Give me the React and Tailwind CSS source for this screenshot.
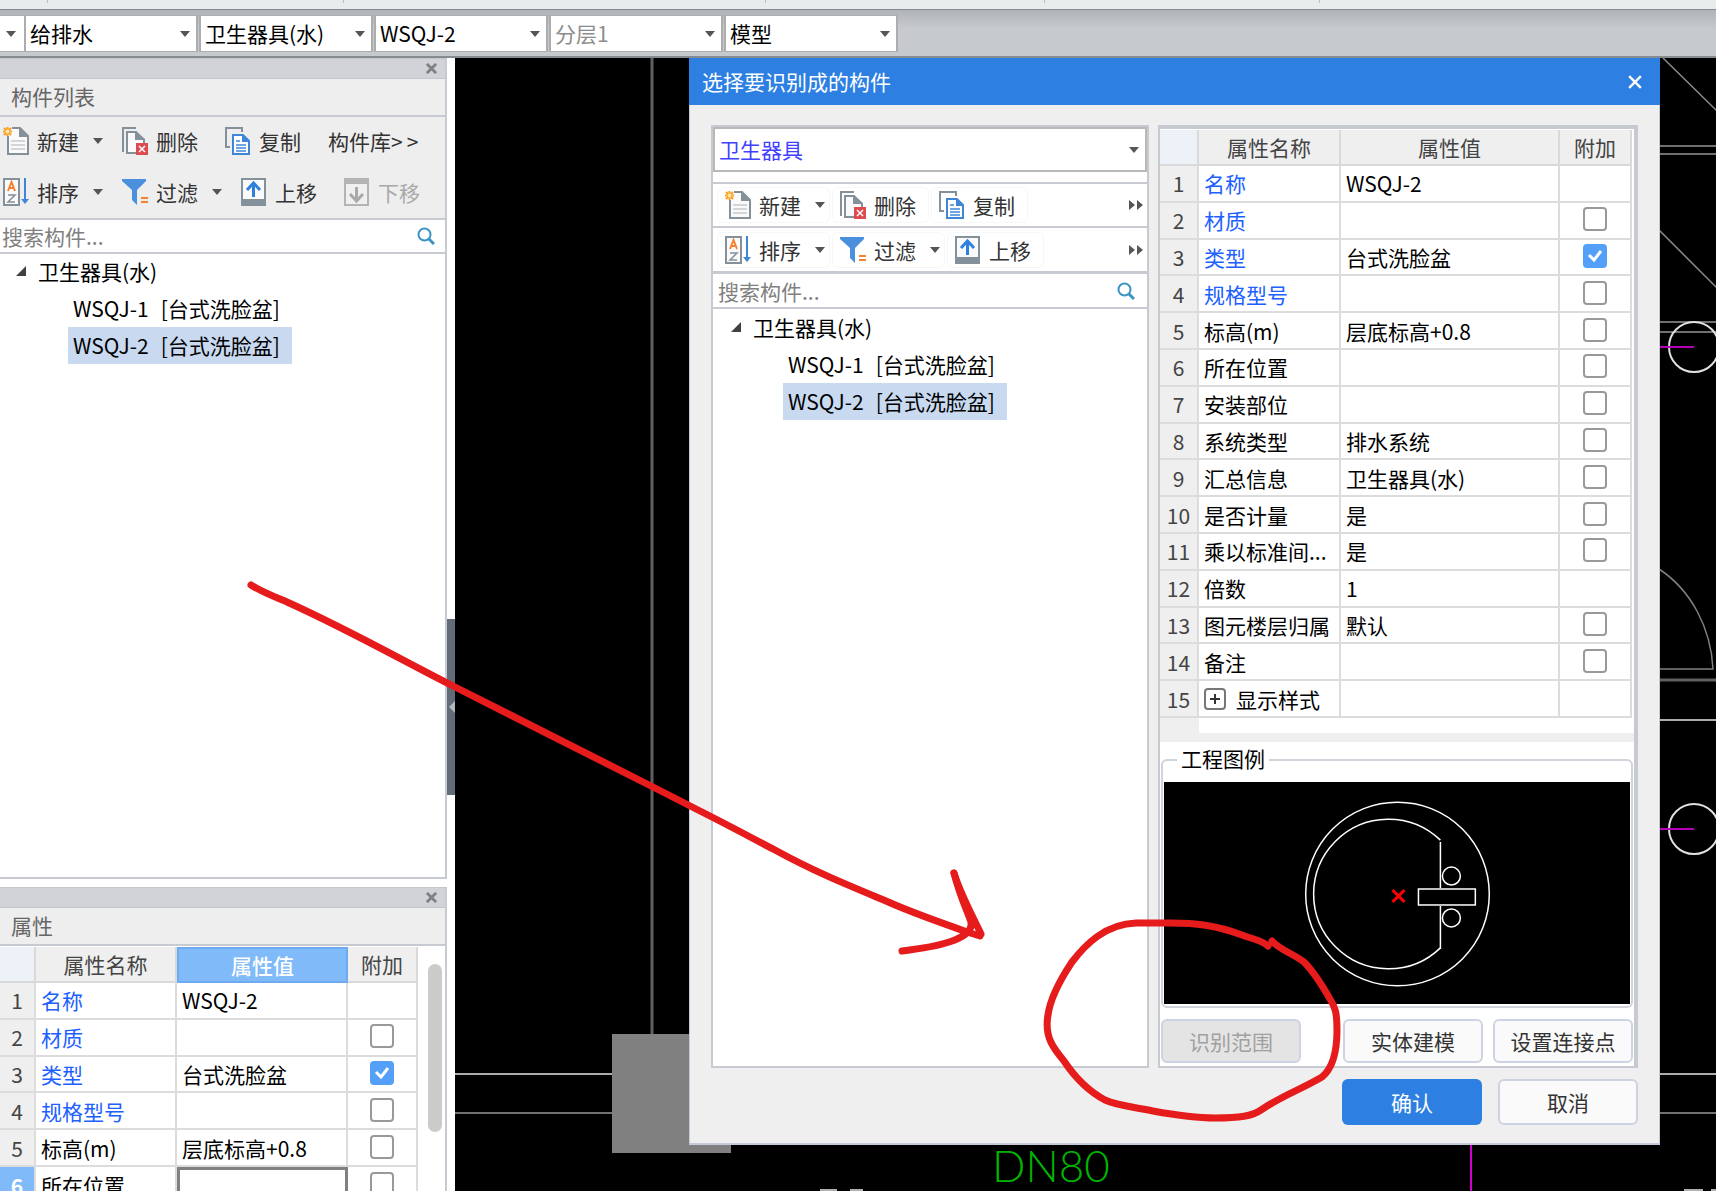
import { useState } from 'react'
import clsx from 'clsx'

const FONT = 'font-["Noto_Sans_CJK_SC",sans-serif]'

const properties = [
  { name: '名称', value: 'WSQJ-2', required: true },
  { name: '材质', value: '', required: true, extra: false },
  { name: '类型', value: '台式洗脸盆', required: true, extra: true },
  { name: '规格型号', value: '', required: true, extra: false },
  { name: '标高(m)', value: '层底标高+0.8', extra: false },
  { name: '所在位置', value: '', extra: false },
  { name: '安装部位', value: '', extra: false },
  { name: '系统类型', value: '排水系统', extra: false },
  { name: '汇总信息', value: '卫生器具(水)', extra: false },
  { name: '是否计量', value: '是', extra: false },
  { name: '乘以标准间...', value: '是', extra: false },
  { name: '倍数', value: '1' },
  { name: '图元楼层归属', value: '默认', extra: false },
  { name: '备注', value: '', extra: false },
  { name: '显示样式', value: '', group: true },
]

function NewIcon() {
  return (
    <svg width="26" height="28" viewBox="0 0 26 28" fill="none">
      <path d="M5 9V27H25V9L17 1H9" fill="#fafafa" stroke="#84909a" strokeWidth="2" />
      <path d="M16 0V10H26Z" fill="#84909a" />
      <path d="M8 14H22M8 18H22M8 22H22" stroke="#d3d6d9" strokeWidth="2" />
      <path d="M4.500 0V9M0 4.500H9M1 1L8 8M8 1L1 8" stroke="#ff9d1e" strokeWidth="2" />
      <circle cx="4.500" cy="4.500" r="2" fill="#ffe9b8" />
    </svg>
  )
}

function DeleteIcon() {
  return (
    <svg width="26" height="28" viewBox="0 0 26 28" fill="none">
      <path d="M1 25V1H14" stroke="#84909a" strokeWidth="2" />
      <path d="M14 26H5V5H14L22 13V16" fill="#fafafa" stroke="#84909a" strokeWidth="2" />
      <path d="M13 4V13H23V12Z" fill="#84909a" />
      <rect x="14" y="16" width="12" height="12" fill="#dc4b50" />
      <path d="M17 19L23 25M23 19L17 25" stroke="#fff" strokeWidth="1.500" />
    </svg>
  )
}

function CopyIcon() {
  return (
    <svg width="26" height="28" viewBox="0 0 26 28" fill="none">
      <path d="M5 20H1V1H17V5" stroke="#84909a" strokeWidth="2" />
      <path d="M8 27V8H18L24 14V27Z" fill="#fff" stroke="#3f86d9" strokeWidth="2" />
      <path d="M17 7V15H25Z" fill="#3f86d9" />
      <path d="M11 14H15M11 18H21M11 21H21M11 24H21" stroke="#3f86d9" strokeWidth="1.500" />
    </svg>
  )
}

function SortIcon() {
  return (
    <svg width="26" height="28" viewBox="0 0 26 28" fill="none">
      <rect x="1" y="1" width="15" height="26" fill="#fafafa" stroke="#84909a" strokeWidth="2" />
      <path d="M5 13L8.500 4L12 13M6 10H11" stroke="#f58233" strokeWidth="2" />
      <path d="M5 17H12L5 24H12" stroke="#84909a" strokeWidth="1.500" />
      <path d="M22 0V23" stroke="#3f86d9" strokeWidth="2" />
      <path d="M18 21H26L22 26Z" fill="#3f86d9" />
    </svg>
  )
}

function FilterIcon() {
  return (
    <svg width="26" height="28" viewBox="0 0 26 28" fill="none">
      <path d="M0 1H24V3L15 12V27L10 22V12L0 3Z" fill="#4a90dd" />
      <path d="M19 20H26M19 24H26" stroke="#f58233" strokeWidth="2" />
    </svg>
  )
}

function MoveUpIcon() {
  return (
    <svg width="26" height="28" viewBox="0 0 26 28" fill="none">
      <rect x="1" y="1" width="23" height="26" fill="#fafafa" stroke="#84909a" strokeWidth="2" />
      <rect x="0" y="21" width="25" height="7" fill="#84909a" />
      <path d="M12.500 19V6M6 12L12.500 5L19 12" stroke="#2f80de" strokeWidth="3" />
    </svg>
  )
}

function MoveDownIcon() {
  return (
    <svg width="26" height="28" viewBox="0 0 26 28" fill="none">
      <rect x="1" y="1" width="23" height="26" fill="#f0f0f0" stroke="#b4b4b4" strokeWidth="2" />
      <rect x="0" y="0" width="25" height="6" fill="#b4b4b4" />
      <path d="M12.500 9V22M6 16L12.500 23L19 16" stroke="#a9a9a9" strokeWidth="3" />
    </svg>
  )
}

function SearchIcon() {
  return (
    <svg width="18" height="18" viewBox="0 0 18 18" fill="none">
      <circle cx="7.500" cy="7.500" r="6" stroke="#3c93c6" strokeWidth="2" />
      <path d="M12 12L17 17" stroke="#3c93c6" strokeWidth="3" />
    </svg>
  )
}

function Caret({ className }) {
  return (
    <svg className={className} width="10" height="6" viewBox="0 0 10 6">
      <path d="M0 0H10L5 6Z" fill="#555" />
    </svg>
  )
}

function CloseIcon({ size, color, width }) {
  return (
    <svg width={size} height={size} viewBox="0 0 12 12">
      <path d="M1 1L11 11M11 1L1 11" stroke={color} strokeWidth={width} />
    </svg>
  )
}

function Combo({ label, value, disabled, className, textClass = 'text-black', caretClass = 'right-1.5' }) {
  return (
    <div className={clsx('relative', className)}>
      <select
        aria-label={label}
        disabled={disabled}
        className={clsx('block w-full h-full appearance-none bg-white pl-1 pr-6 pb-0.5 outline-none opacity-100', textClass)}
      >
        <option>{value}</option>
      </select>
      <Caret className={clsx('absolute top-1/2 -translate-y-1/2 pointer-events-none', caretClass)} />
    </div>
  )
}

function ToolButton({ icon, label, menu, framed, disabled }) {
  return (
    <button
      type="button"
      disabled={disabled}
      className={clsx(
        'flex items-center shrink-0 h-9 whitespace-nowrap',
        framed && 'pl-2 rounded-md shadow-[inset_0_0_0_1px_#f7f7f7]',
        menu ? 'pr-[5px]' : 'pr-[13px]',
        disabled ? 'text-[#a9a9a9]' : 'text-[#333]'
      )}
    >
      {icon}
      <span className="ml-2">{label}</span>
      {menu && <Caret className="ml-3.5" />}
    </button>
  )
}

function MoreButton() {
  return (
    <button type="button" aria-label="更多" className="ml-auto mr-1">
      <svg width="14" height="10" viewBox="0 0 14 10">
        <path d="M0 0L6 5L0 10ZM8 0L14 5L8 10Z" fill="#555" />
      </svg>
    </button>
  )
}

function SearchBox({ id, className }) {
  return (
    <div className={clsx('flex items-center bg-white', className)}>
      <input
        id={id}
        type="text"
        aria-label="搜索构件"
        placeholder="搜索构件..."
        className="flex-1 min-w-0 h-full outline-none placeholder:text-[#808080]"
      />
      <SearchIcon />
    </div>
  )
}

function Tree({ className }) {
  const [selected, setSelected] = useState('WSQJ-2')

  return (
    <ul className={clsx('flex-1 bg-white text-black', className)}>
      <li>
        <button type="button" className="flex items-center h-9 gap-3 pb-0.5">
          <svg width="10" height="10" viewBox="0 0 10 10">
            <path d="M10 0V10H0Z" fill="#404040" />
          </svg>
          卫生器具(水)
        </button>
        <ul className="pl-[52px]">
          {['WSQJ-1', 'WSQJ-2'].map((code) => (
            <li key={code}>
              <button
                type="button"
                onClick={() => setSelected(code)}
                className={clsx(
                  'flex items-center gap-3 h-[37px] w-56 pl-[5px] pb-0.5 whitespace-nowrap',
                  selected === code && 'bg-[#c8d9f0]'
                )}
              >
                <span>{code}</span>
                <span>[台式洗脸盆]</span>
              </button>
            </li>
          ))}
        </ul>
      </li>
    </ul>
  )
}

function ExtraCheck({ name, defaultChecked }) {
  return (
    <span className="relative block size-6 mx-auto mb-0.5">
      <input
        type="checkbox"
        aria-label={`${name} 附加`}
        defaultChecked={defaultChecked}
        className="peer block size-6 appearance-none rounded-[4px] border-2 border-[#999] bg-white checked:border-[#54a0f8] checked:bg-[#54a0f8]"
      />
      <svg className="absolute inset-0 hidden peer-checked:block pointer-events-none" viewBox="0 0 24 24" fill="none">
        <path d="M6 11L11 16L18 7" stroke="#fff" strokeWidth="3" />
      </svg>
    </span>
  )
}

function PropertyTable({ rows, columns, activeRow, className }) {
  const head = 'border-r-2 border-b-2 border-[#d9d9d9] bg-[#efefef] font-normal text-[#444]'
  const cell = 'border-r-2 border-b-2 border-[#dcdcdc]'

  return (
    <table className={clsx('w-full table-fixed border-separate border-spacing-0 bg-white', className)}>
      <colgroup>
        {columns.map((c, i) => (
          <col key={i} className={c} />
        ))}
      </colgroup>
      <thead>
        <tr className="h-9">
          <th className="border-r-2 border-b-2 border-[#d9d9d9] bg-[#edf1f8]" />
          <th className={head}>属性名称</th>
          <th className={activeRow ? 'border-2 border-[#6eaaf0] bg-[#80baf9] font-medium text-white' : head}>属性值</th>
          <th className={head}>附加</th>
        </tr>
      </thead>
      <tbody>
        {rows.map((p, i) => {
          const active = activeRow === i + 1
          return (
            <tr key={p.name} className="h-9">
              <td
                className={clsx(
                  'border-r-2 border-b-2 border-[#dcdcdc] text-center',
                  active ? 'bg-[#80baf9] font-bold text-white' : 'bg-[#efefef] text-[#444]'
                )}
              >
                {i + 1}
              </td>
              <td className={clsx(cell, 'pl-[5px] whitespace-nowrap overflow-hidden', p.required ? 'text-[#2060ff]' : 'text-black')}>
                {p.group ? (
                  <span className="flex items-center gap-2.5">
                    <button
                      type="button"
                      aria-label="展开"
                      className="flex items-center justify-center size-[22px] rounded-[4px] border-2 border-[#777]"
                    >
                      <svg width="10" height="10" viewBox="0 0 10 10">
                        <path d="M5 0V10M0 5H10" stroke="#333" strokeWidth="2" />
                      </svg>
                    </button>
                    {p.name}
                  </span>
                ) : (
                  p.name
                )}
              </td>
              <td className={clsx('pl-[5px] whitespace-nowrap text-black', active ? 'border-3 border-[#808080]' : cell)}>{p.value}</td>
              <td className={cell}>{p.extra !== undefined && <ExtraCheck name={p.name} defaultChecked={p.extra} />}</td>
            </tr>
          )
        })}
      </tbody>
    </table>
  )
}

function DockTitle({ title }) {
  return (
    <>
      <div className="flex items-center justify-end h-[21px] pr-2 bg-[#d2d3d9] border-y border-[#c3c6cb]">
        <button type="button" aria-label={`关闭${title}`}>
          <CloseIcon size={11} color="#808080" width={3} />
        </button>
      </div>
      <h2 className="flex items-center h-[38px] pl-[11px] pb-0.5 bg-[#eee] border-b-2 border-[#c7cad0] text-[#666]">{title}</h2>
    </>
  )
}

function Sidebar() {
  return (
    <aside className="flex flex-col w-[447px] shrink-0 bg-white">
      <section className="flex flex-col h-[821px] border-r-2 border-b-2 border-[#c7cad0]">
        <DockTitle title="构件列表" />
        <div className="bg-[#eee] pl-[3px] pt-1.5 pb-2 border-b-2 border-[#c7cad0]">
          <div className="flex gap-3.5 mb-[15px]">
            <ToolButton icon={<NewIcon />} label="新建" menu />
            <ToolButton icon={<DeleteIcon />} label="删除" />
            <ToolButton icon={<CopyIcon />} label="复制" />
            <button type="button" className="flex items-center gap-1 text-[#333] whitespace-nowrap">
              <span>构件库&gt;</span>
              <span>&gt;</span>
            </button>
          </div>
          <div className="flex gap-3.5">
            <ToolButton icon={<SortIcon />} label="排序" menu />
            <ToolButton icon={<FilterIcon />} label="过滤" menu />
            <ToolButton icon={<MoveUpIcon />} label="上移" />
            <ToolButton icon={<MoveDownIcon />} label="下移" disabled />
          </div>
        </div>
        <SearchBox id="dock-search" className="h-[34px] pl-0.5 pr-2.5 border-b-2 border-[#c7cad0]" />
        <Tree className="pl-4" />
      </section>

      <section className="flex flex-col flex-1 min-h-0 mt-2 border-r-2 border-[#c7cad0]">
        <DockTitle title="属性" />
        <div className="flex flex-1 min-h-0 overflow-hidden">
          <div className="w-[418px] pt-px">
            <PropertyTable
              rows={properties.slice(0, 6)}
              columns={['w-9', 'w-[141px]', 'w-[171px]', 'w-[70px]']}
              activeRow={6}
              className="h-[257px]"
            />
          </div>
          <div className="flex-1 pt-[18px] pl-2.5">
            <div className="w-3.5 h-[168px] rounded-full bg-[#cbcbcb]" />
          </div>
        </div>
      </section>
    </aside>
  )
}

function Drawing() {
  return (
    <svg className="absolute inset-0 w-full h-full" fill="none">
      <path d="M197 0V976" stroke="#606060" strokeWidth="3" />
      <path d="M0 1016H157M1205 1016H1400" stroke="#a8acac" strokeWidth="2" />
      <path d="M0 1055H157M1205 1055H1400" stroke="#707070" strokeWidth="2" />
      <rect x="157" y="976" width="119" height="119" fill="#808080" />
      <path d="M1208 0L1262 53M1204 172L1262 230" stroke="#8a8a8a" strokeWidth="1.500" />
      <path d="M1205 88H1400M1205 96H1400M1205 264H1400M1205 274H1400" stroke="#707070" strokeWidth="2" />
      <path d="M1204 511C1236 532 1256 570 1258 611H1204" stroke="#808080" strokeWidth="1.500" />
      <path d="M1205 622H1400" stroke="#606060" strokeWidth="3" />
      <path d="M1205 662H1400" stroke="#a8acac" strokeWidth="2" />
      <circle cx="1239" cy="289" r="25" stroke="#e0e0e0" strokeWidth="2" />
      <circle cx="1239" cy="771" r="25" stroke="#e0e0e0" strokeWidth="2" />
      <path d="M1205 289H1239M1205 771H1239" stroke="#b400b4" strokeWidth="2" />
      <path d="M1016 1080V1140" stroke="#d000d0" strokeWidth="2" />
      <path d="M365 1132H382M395 1132H408M1229 1132H1248M1256 1132H1262" stroke="#b0b0b0" strokeWidth="2" />
      <text x="537" y="1124" fill="#00b400" className="font-['Lato',sans-serif] text-[44px] font-light">
        DN80
      </text>
    </svg>
  )
}

function LegendPreview() {
  return (
    <svg className="block w-full h-[222px] bg-black" viewBox="0 0 467 222" fill="none" stroke="#fff" strokeWidth="1.500">
      <circle cx="234" cy="112" r="92" />
      <path d="M277 58A75 75 0 1 0 277 166" />
      <path d="M277 60V106M277 124V167" />
      <rect x="255" y="107" width="57" height="16" />
      <circle cx="288" cy="94" r="9" />
      <circle cx="288" cy="136" r="9" />
      <path d="M229 108L241 120M241 108L229 120" stroke="#f00" strokeWidth="3" />
    </svg>
  )
}

function PickDialog() {
  const plain = 'w-[140px] rounded-md border-2 border-[#cdd3e2] bg-[#fafafa] text-[#333]'

  return (
    <div role="dialog" aria-label="选择要识别成的构件" className="absolute left-[234px] right-14 top-0 bg-[#efefef]">
      <div className="flex items-center justify-between h-[47px] pl-[13px] pr-4 bg-[#2d80e2] text-white">
        <h1 className="pb-0.5">选择要识别成的构件</h1>
        <button type="button" aria-label="关闭" className="mr-0.5">
          <CloseIcon size={14} color="#fff" width={2} />
        </button>
      </div>

      <div className="px-[21px] pt-5 pb-[18px] border-x border-b-2 border-[#c5cad8]">
        <div className="flex">
          <div className="flex flex-col flex-1 min-w-0 border-2 border-[#c7cad0] bg-white">
            <Combo
              label="构件类型"
              value="卫生器具"
              className="h-[45px] border-2 border-[#b8b8b8]"
              textClass="text-[#4040ff]"
            />
            <div className="flex items-center gap-0.5 h-[46px] mt-2.5 pl-1 border-y-2 border-[#c7cad0]">
              <ToolButton icon={<NewIcon />} label="新建" menu framed />
              <ToolButton icon={<DeleteIcon />} label="删除" framed />
              <ToolButton icon={<CopyIcon />} label="复制" framed />
              <MoreButton />
            </div>
            <div className="flex items-center gap-0.5 h-[46px] pl-1 border-b-3 border-[#c7cad0]">
              <ToolButton icon={<SortIcon />} label="排序" menu framed />
              <ToolButton icon={<FilterIcon />} label="过滤" menu framed />
              <ToolButton icon={<MoveUpIcon />} label="上移" framed />
              <MoreButton />
            </div>
            <SearchBox id="dialog-search" className="h-[35px] pl-[5px] pr-3 border-b-2 border-[#c7cad0]" />
            <Tree className="pl-[18px] pt-px" />
          </div>

          <div className="w-[9px] shrink-0" />

          <div className="w-[480px] shrink-0 border-2 border-t-4 border-r-4 border-[#c7cad0] bg-white">
            <div className="pt-px pr-0.5">
              <PropertyTable
                rows={properties}
                columns={['w-[39px]', 'w-[142px]', '', 'w-[72px]']}
                className="h-[588px]"
              />
            </div>
            <div className="w-[39px] h-[15px] bg-[#efefef]" />
            <div className="h-[9px] bg-[#efefef]" />
            <fieldset className="mx-px mt-0.5 pb-0.5 min-w-0 rounded-md border-2 border-[#d0d4da]">
              <legend className="ml-3.5 px-1 pb-1 h-8 leading-7 text-black">工程图例</legend>
              <div className="px-px pt-1.5">
                <LegendPreview />
              </div>
            </fieldset>
            <div className="flex h-11 mx-px mt-[11px] mb-[3px]">
              <button type="button" disabled className="w-[140px] mr-auto rounded-md border-2 border-[#cdd3e2] bg-[#e4e4e4] text-[#a0a0a0]">
                识别范围
              </button>
              <button type="button" className={clsx(plain, 'mr-2.5')}>
                实体建模
              </button>
              <button type="button" className={plain}>
                设置连接点
              </button>
            </div>
          </div>
        </div>

        <div className="flex justify-end gap-4 h-[46px] mt-[11px]">
          <button type="button" className="w-[140px] rounded-md bg-[#2d80e2] text-white">
            确认
          </button>
          <button type="button" className={plain}>
            取消
          </button>
        </div>
      </div>
    </div>
  )
}

// Hand-drawn red arrow and circle that lie over the whole window
function Markup() {
  return (
    <svg
      className="absolute inset-0 w-full h-full pointer-events-none"
      fill="none"
      stroke="#e61b1b"
      strokeWidth="7"
      strokeLinecap="round"
      strokeLinejoin="round"
    >
      <path d="M251 585C262 592 275 597 287 602C345 628 398 658 453 686L653 787L700 811C728 825 750 837 775 850C815 872 850 886 886 901C915 914 940 922 967 932L980 936" />
      <path d="M954 873C960 897 967 910 971 922C974 940 935 947 902 951" />
      <path d="M954 873C960 893 972 915 981 934" />
      <path d="M1268 946C1262 940 1252 939 1242 935C1215 925 1195 923 1171 923H1136C1105 924 1085 945 1072 962C1060 980 1050 1000 1048 1015C1044 1037 1054 1049 1064 1061C1076 1079 1090 1092 1105 1100C1118 1106 1135 1107 1153 1111C1175 1115 1195 1118 1215 1118C1240 1118 1252 1116 1261 1110C1283 1095 1300 1090 1322 1077C1333 1068 1337 1050 1337 1030C1337 1012 1335 1007 1330 999C1322 985 1314 972 1304 962C1294 954 1280 950 1272 941" />
    </svg>
  )
}

export default function App() {
  return (
    <div className={clsx('relative flex flex-col h-screen overflow-hidden bg-white text-[21px] leading-7', FONT)}>
      <div className="flex h-[9px] shrink-0 bg-[#e9eced]">
        <div className="w-12 h-[3px] border-r border-[#b9bdc1]" />
        <div className="w-[296px] h-[3px] border-r border-[#b9bdc1]" />
        <div className="w-[422px] h-[3px] border-r border-[#b9bdc1]" />
        <div className="w-[279px] h-[3px] border-r border-[#b9bdc1]" />
        <div className="w-[275px] h-[3px] border-r border-[#b9bdc1]" />
      </div>

      <header className="flex h-[49px] shrink-0 pt-[5px] pb-1 border-t border-b-2 border-[#868b90] bg-linear-to-b from-[#b0b3b7] to-[#c6c9cd] to-40%">
        <Combo label="楼层" value="" className="w-6 border-y border-r-2 border-[#adadad]" />
        <div className="flex gap-px">
          <Combo label="专业" value="给排水" className="w-[174px] border-y border-x-2 border-[#adadad]" />
          <Combo label="构件类型" value="卫生器具(水)" className="w-[174px] border-y border-x-2 border-[#adadad]" />
          <Combo label="构件" value="WSQJ-2" className="w-[174px] border-y border-x-2 border-[#adadad]" />
          <Combo
            label="分层"
            value="分层1"
            disabled
            className="w-[174px] border-y border-x-2 border-[#adadad]"
            textClass="text-[#8c8c8c]"
          />
          <Combo label="显示" value="模型" className="w-[174px] border-y border-x-2 border-[#adadad]" />
        </div>
      </header>

      <div className="flex flex-1 min-h-0">
        <Sidebar />
        <div className="flex items-center w-2 shrink-0 pt-[165px] bg-white">
          <button type="button" aria-label="收起" className="flex items-center justify-end w-2 h-44 bg-[#616c78]">
            <svg width="6" height="12" viewBox="0 0 6 12">
              <path d="M6 0V12L0 6Z" fill="#b4b9be" />
            </svg>
          </button>
        </div>
        <main className="relative flex-1 min-w-0 bg-black overflow-hidden">
          <Drawing />
          <PickDialog />
        </main>
      </div>

      <Markup />
    </div>
  )
}
